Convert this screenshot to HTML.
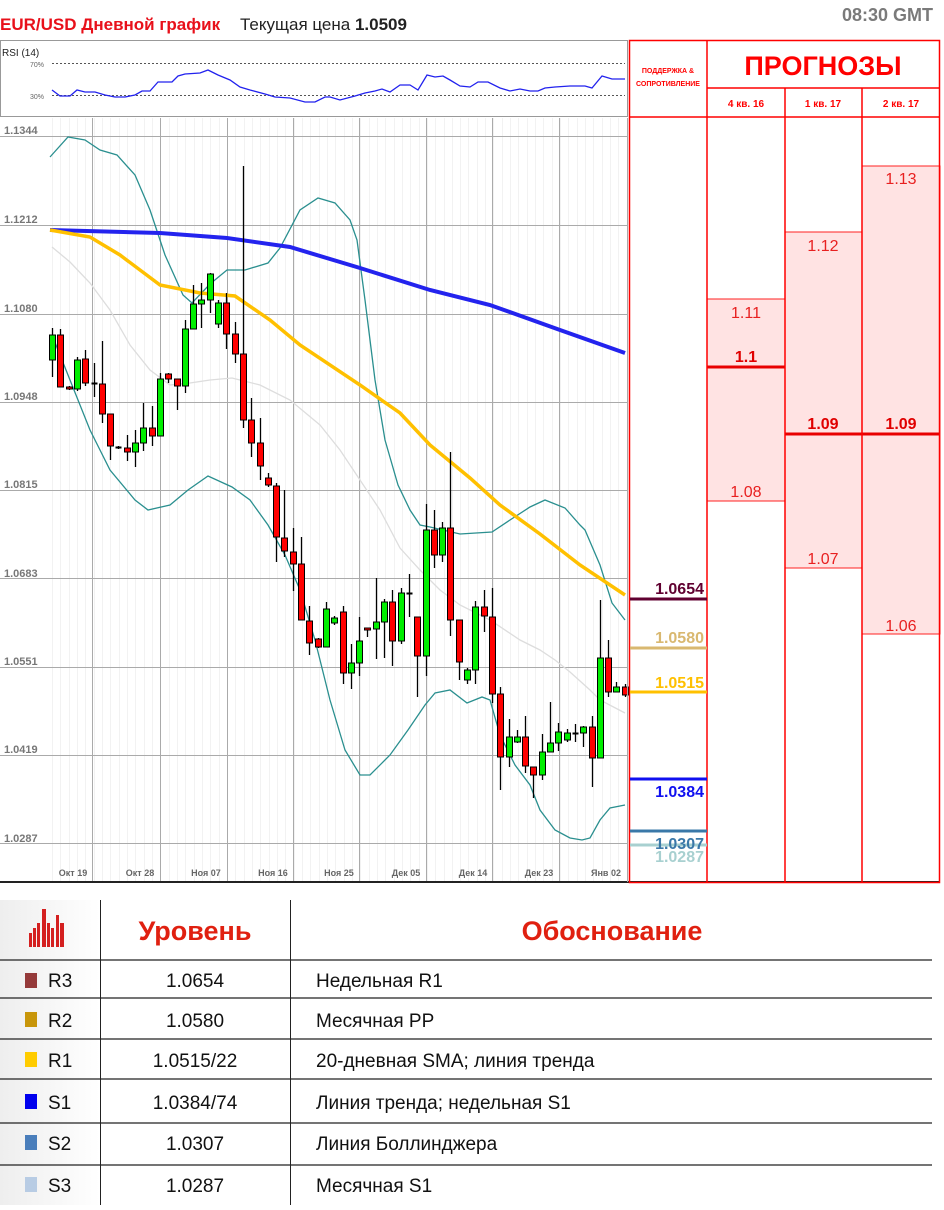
<!DOCTYPE html>
<html><head><meta charset="utf-8"><style>
body{margin:0;width:944px;height:1208px;background:#fff;position:relative;overflow:hidden;font-family:"Liberation Sans",sans-serif}
.t{position:absolute;white-space:nowrap}
</style></head><body>
<svg id="s" width="944" height="890" style="position:absolute;left:0;top:0" font-family="Liberation Sans, sans-serif">
<text x="0" y="30" font-size="17" font-weight="bold" fill="#e8101a">EUR/USD Дневной график</text>
<text x="240" y="30" font-size="17" fill="#222">Текущая цена <tspan font-weight="bold">1.0509</tspan></text>
<text x="933" y="21" font-size="18" font-weight="bold" fill="#7a7a7a" text-anchor="end">08:30 GMT</text>
<!-- RSI box -->
<rect x="0.5" y="40.5" width="627" height="76" fill="#fff" stroke="#999"/>
<text x="2" y="56" font-size="10" fill="#222">RSI (14)</text>
<line x1="52" y1="63.5" x2="625" y2="63.5" stroke="#555" stroke-dasharray="2,2"/>
<line x1="52" y1="95.5" x2="625" y2="95.5" stroke="#555" stroke-dasharray="2,2"/>
<text x="30" y="67" font-size="7" fill="#666">70%</text>
<text x="30" y="99" font-size="7" fill="#666">30%</text>
<polyline fill="none" stroke="#2222ee" stroke-width="1.3" points="52,90 60,96 70,96 77,90 85,92 95,92 105,95 115,97 125,97 135,95 142,91 150,91 158,82 172,82 178,76 185,74 200,73 208,70 218,75 230,80 240,87 250,90 265,94 275,97 290,98 305,102 315,102 325,97 330,97 340,100 355,96 365,93 375,91 382,89 390,92 400,85 410,85 418,90 427,75 435,77 443,76 450,80 460,86 470,87 478,82 488,82 500,88 510,91 520,89 530,91 538,91 545,88 555,87 570,86 585,86 592,88 602,76 612,79 625,79"/>
<!-- chart grid -->
<g id="grid" stroke="#aaa" stroke-width="1"></g>
<g font-size="11" font-weight="bold" fill="#777">
<text x="4" y="134">1.1344</text><text x="4" y="223">1.1212</text><text x="4" y="312">1.1080</text><text x="4" y="400">1.0948</text><text x="4" y="488">1.0815</text><text x="4" y="577">1.0683</text><text x="4" y="665">1.0551</text><text x="4" y="753">1.0419</text><text x="4" y="842">1.0287</text>
</g>
<g font-size="9" font-weight="bold" fill="#666" text-anchor="middle">
<text x="73" y="876">Окт 19</text><text x="140" y="876">Окт 28</text><text x="206" y="876">Ноя 07</text><text x="273" y="876">Ноя 16</text><text x="339" y="876">Ноя 25</text><text x="406" y="876">Дек 05</text><text x="473" y="876">Дек 14</text><text x="539" y="876">Дек 23</text><text x="606" y="876">Янв 02</text>
</g>
<polyline fill="none" stroke="#ddd" stroke-width="1.3" points="52,247 70,262 90,283 110,310 130,345 150,370 170,385 190,383 210,380 232,378 260,385 290,400 320,425 340,450 360,480 380,510 400,548 420,570 440,590 460,605 490,620 520,640 540,650 555,660 570,672 590,690 600,700 625,713"/>
<polyline fill="none" stroke="#2a8f8f" stroke-width="1.3" points="50,157 68,137 85,140 100,150 117,155 135,175 150,210 165,255 183,295 192,303 210,284 227,270 245,270 268,263 280,248 300,210 318,198 335,203 350,220 357,240 365,300 375,380 385,440 398,485 410,510 420,525 430,527 460,534 492,532 510,520 530,507 545,500 565,508 580,525 585,530 600,565 612,603 625,620"/>
<polyline fill="none" stroke="#2a8f8f" stroke-width="1.3" points="52,335 70,380 90,430 110,470 135,500 148,510 170,505 188,490 208,476 232,487 250,500 268,525 285,555 300,590 315,640 330,700 345,750 360,775 370,775 390,755 408,730 425,705 435,693 450,690 467,703 482,697 490,700 500,735 515,765 530,785 540,810 555,830 570,838 582,840 590,838 600,820 610,808 625,805"/>
<polyline fill="none" stroke="#2323ee" stroke-width="4" points="50,230 160,233 227,238 290,247 360,268 430,290 490,305 560,330 625,353"/>
<polyline fill="none" stroke="#ffc000" stroke-width="3.5" points="50,230 90,237 120,255 160,285 200,293 235,296 270,320 300,345 360,385 400,413 430,445 470,478 500,505 540,534 580,565 625,595"/>
<g id="candles"></g>
<line x1="0" y1="882" x2="940" y2="882" stroke="#222" stroke-width="2"/>
<line x1="627.5" y1="118" x2="627.5" y2="882" stroke="#aaa"/>
<!-- right table -->
<rect x="707" y="299" width="78" height="202" fill="#ffe3e3" stroke="#f22"/>
<rect x="785" y="232" width="77" height="336" fill="#ffe3e3" stroke="#f22"/>
<rect x="862" y="166" width="78" height="468" fill="#ffe3e3" stroke="#f22"/>
<g font-size="16" fill="#e82020" text-anchor="middle">
<text x="746" y="318">1.11</text><text x="746" y="497">1.08</text>
<text x="823" y="251">1.12</text><text x="823" y="564">1.07</text>
<text x="901" y="184">1.13</text><text x="901" y="631">1.06</text>
</g>
<line x1="707" y1="367" x2="785" y2="367" stroke="#e80000" stroke-width="3"/>
<line x1="785" y1="434" x2="940" y2="434" stroke="#e80000" stroke-width="3"/>
<g font-size="16" font-weight="bold" fill="#e00000" text-anchor="middle">
<text x="746" y="362">1.1</text><text x="823" y="429">1.09</text><text x="901" y="429">1.09</text>
</g>
<g stroke="#f00" stroke-width="1.5" fill="none">
<rect x="629.5" y="40.5" width="310" height="842"/>
<line x1="707" y1="40" x2="707" y2="882"/><line x1="785" y1="88" x2="785" y2="882"/><line x1="862" y1="88" x2="862" y2="882"/>
<line x1="707" y1="88" x2="940" y2="88"/><line x1="629" y1="117" x2="940" y2="117"/>
</g>
<text x="823" y="75" font-size="27" font-weight="bold" fill="#f00" text-anchor="middle">ПРОГНОЗЫ</text>
<g font-size="7" font-weight="bold" fill="#f00" text-anchor="middle"><text x="668" y="73">ПОДДЕРЖКА &amp;</text><text x="668" y="86">СОПРОТИВЛЕНИЕ</text></g>
<g font-size="10" font-weight="bold" fill="#f00" text-anchor="middle"><text x="746" y="107">4 кв. 16</text><text x="823" y="107">1 кв. 17</text><text x="901" y="107">2 кв. 17</text></g>
<!-- levels -->
<line x1="630" y1="599" x2="707" y2="599" stroke="#600030" stroke-width="3"/>
<line x1="630" y1="648" x2="707" y2="648" stroke="#d9b870" stroke-width="3"/>
<line x1="630" y1="692" x2="707" y2="692" stroke="#ffc000" stroke-width="3"/>
<line x1="630" y1="779" x2="707" y2="779" stroke="#1010f0" stroke-width="3"/>
<line x1="630" y1="831" x2="707" y2="831" stroke="#3a78a8" stroke-width="3"/>
<line x1="630" y1="845" x2="707" y2="845" stroke="#a8d0d0" stroke-width="3"/>
<g font-size="16" font-weight="bold" text-anchor="end">
<text x="704" y="594" fill="#600030">1.0654</text>
<text x="704" y="643" fill="#d9b870">1.0580</text>
<text x="704" y="688" fill="#ffc000">1.0515</text>
<text x="704" y="797" fill="#1010f0">1.0384</text>
<text x="704" y="849" fill="#3a78a8">1.0307</text>
<text x="704" y="862" fill="#a8d0d0">1.0287</text>
</g>
</svg>
<script>
var ns="http://www.w3.org/2000/svg",g=document.getElementById("grid");
function L(p,x1,y1,x2,y2,c,w){var l=document.createElementNS(ns,"line");l.setAttribute("x1",x1);l.setAttribute("y1",y1);l.setAttribute("x2",x2);l.setAttribute("y2",y2);l.setAttribute("stroke",c);l.setAttribute("stroke-width",w);p.appendChild(l);}
for(var x=52;x<627;x+=8.33)L(g,Math.round(x)+.5,118,Math.round(x)+.5,882,"#f2f2f2",1);
[136,225,314,402,490,578,667,755,843].forEach(function(y){L(g,0,y+.5,627,y+.5,"#aaa",1)});
[92,160,227,293,359,426,492,559].forEach(function(x){L(g,x+.5,118,x+.5,882,"#aaa",1)});
var d=[[335,360,328,377,1],[335,387,329,387,0],[387,389,386,390,0],[360,389,357,391,1],[359,383,350,386,0],[383,384,363,397,2],[384,414,341,423,0],[414,446,414,460,0],[447,448,446,449,2],[448,452,435,461,0],[443,452,430,467,1],[428,443,403,451,1],[428,436,406,446,0],[379,436,373,436,1],[374,379,373,383,0],[379,386,379,410,0],[329,386,320,393,1],[304,329,285,329,1],[300,304,283,328,1],[274,300,273,313,1],[303,324,300,328,1],[303,334,293,349,0],[334,354,322,363,0],[354,420,166,428,0],[420,443,398,457,0],[443,466,418,480,0],[478,485,473,487,0],[486,537,483,562,0],[538,551,490,557,0],[552,564,528,591,0],[564,620,537,620,0],[621,643,606,655,0],[639,647,638,648,0],[609,647,602,647,1],[618,623,616,625,1],[612,673,606,684,0],[663,673,644,689,1],[641,663,617,676,1],[628,630,628,637,0],[622,629,578,659,1],[602,622,599,658,1],[602,641,590,666,0],[593,641,588,644,1],[593,594,574,617,2],[617,656,617,697,0],[530,656,504,676,1],[530,555,510,568,0],[528,555,522,562,1],[528,620,452,636,0],[620,662,620,680,0],[670,680,668,684,1],[607,670,601,684,1],[607,616,590,632,0],[617,694,588,703,0],[694,757,687,790,0],[737,757,719,767,1],[737,742,730,743,1],[737,766,716,773,0],[767,775,767,798,0],[752,775,734,780,1],[743,752,702,752,1],[732,743,723,751,1],[733,740,729,742,1],[733,734,724,742,2],[727,733,726,747,1],[727,758,716,787,0],[658,758,600,758,1],[658,692,640,697,0],[687,692,682,692,1],[687,695,684,697,0]];
var c=document.getElementById("candles");
d.forEach(function(k,i){var x=Math.round(52+8.3*i)+.5;L(c,x,k[2],x,k[3],"#000",1.3);
if(k[4]==2){L(c,x-3,k[0]+.5,x+3,k[0]+.5,"#000",2);return;}
var r=document.createElementNS(ns,"rect");r.setAttribute("x",x-3);r.setAttribute("y",k[0]);r.setAttribute("width",6);r.setAttribute("height",Math.max(2,k[1]-k[0]));r.setAttribute("fill",k[4]?"#00ee00":"#ff0000");r.setAttribute("stroke","#000");r.setAttribute("stroke-width",1);c.appendChild(r);});
</script>
<!-- bottom table -->
<div style="position:absolute;left:0;top:900px;width:100px;height:305px;background:linear-gradient(90deg,#eee,#fff)"></div>
<svg width="944" height="320" style="position:absolute;left:0;top:890px">
<g fill="#d42020"><rect x="29" y="43" width="3" height="14"/><rect x="33" y="38" width="3" height="19"/><rect x="37" y="33" width="3" height="24"/><rect x="42" y="19" width="4" height="38"/><rect x="47" y="33" width="3" height="24"/><rect x="51" y="38" width="3" height="19"/><rect x="56" y="25" width="3" height="32"/><rect x="60" y="33" width="4" height="24"/></g>
<line x1="100.5" y1="10" x2="100.5" y2="315" stroke="#222"/>
<line x1="290.5" y1="10" x2="290.5" y2="315" stroke="#222"/>
<g stroke="#222" stroke-width="1.3"><line x1="0" y1="70" x2="932" y2="70"/><line x1="0" y1="108" x2="932" y2="108"/><line x1="0" y1="149" x2="932" y2="149"/><line x1="0" y1="189" x2="932" y2="189"/><line x1="0" y1="233" x2="932" y2="233"/><line x1="0" y1="275" x2="932" y2="275"/></g>
<rect x="25" y="83" width="12" height="15" fill="#953a3a"/><rect x="25" y="122" width="12" height="15" fill="#c8960a"/><rect x="25" y="162" width="12" height="15" fill="#ffcc00"/><rect x="25" y="204" width="12" height="15" fill="#0000ee"/><rect x="25" y="245" width="12" height="15" fill="#4a7ebb"/><rect x="25" y="287" width="12" height="15" fill="#b8cce4"/>
<text x="195" y="50" font-size="27" font-weight="bold" fill="#e02010" text-anchor="middle">Уровень</text>
<text x="612" y="50" font-size="27" font-weight="bold" fill="#e02010" text-anchor="middle">Обоснование</text>
<g font-size="19" fill="#111">
<text x="48" y="97">R3</text><text x="48" y="137">R2</text><text x="48" y="177">R1</text><text x="48" y="219">S1</text><text x="48" y="260">S2</text><text x="48" y="302">S3</text>
<g text-anchor="middle"><text x="195" y="97">1.0654</text><text x="195" y="137">1.0580</text><text x="195" y="177">1.0515/22</text><text x="195" y="219">1.0384/74</text><text x="195" y="260">1.0307</text><text x="195" y="302">1.0287</text></g>
<text x="316" y="97">Недельная R1</text><text x="316" y="137">Месячная PP</text><text x="316" y="177">20-дневная SMA; линия  тренда</text><text x="316" y="219">Линия тренда; недельная S1</text><text x="316" y="260">Линия Боллинджера</text><text x="316" y="302">Месячная S1</text>
</g>
</svg>
</body></html>
